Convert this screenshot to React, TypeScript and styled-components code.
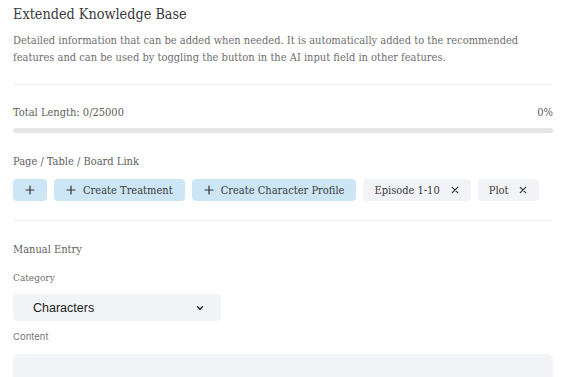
import React from 'react';
import styled, {createGlobalStyle} from "styled-components";

const GlobalStyle = createGlobalStyle`
    html, body {
        margin: 0;
        padding: 0;
        background: #ffffff;
    }
    body {
        font-family: "DejaVu Serif Condensed", "DejaVu Serif", serif;
        color: #333333;
    }
    * {
        box-sizing: border-box;
    }
`

type ChipData = { label: string; kind: "add" | "link" }

const chips: ChipData[] = [
    {label: "", kind: "add"},
    {label: "Create Treatment", kind: "add"},
    {label: "Create Character Profile", kind: "add"},
    {label: "Episode 1-10", kind: "link"},
    {label: "Plot", kind: "link"},
]

const PlusIcon = () => (
    <svg width="10" height="10" viewBox="0 0 10 10">
        <path d="M5 1v8M1 5h8" stroke="#333" strokeWidth="1.2" strokeLinecap="round"/>
    </svg>
)

const CloseIcon = () => (
    <svg width="8" height="8" viewBox="0 0 8 8">
        <path d="M1.3 1.3l5.4 5.4M6.7 1.3L1.3 6.7" stroke="#333" strokeWidth="1.2" strokeLinecap="round"/>
    </svg>
)

const Chevron = () => (
    <ChevronIcon width="8" height="6" viewBox="0 0 8 6">
        <path d="M1.5 1.8L4 4.2l2.5-2.4" fill="none" stroke="#222" strokeWidth="1.4" strokeLinecap="round" strokeLinejoin="round"/>
    </ChevronIcon>
)

export default function App() {
    return (
        <>
            <GlobalStyle/>
            <Page>
                <Title>Extended Knowledge Base</Title>
                <Description>
                    Detailed information that can be added when needed. It is automatically added to the recommended
                    features and can be used by toggling the button in the AI input field in other features.
                </Description>
                <Divider $top={18}/>
                <LengthRow>
                    <span>Total Length: 0/25000</span>
                    <span>0%</span>
                </LengthRow>
                <ProgressTrack>
                    <ProgressFill style={{width: "0%"}}/>
                </ProgressTrack>
                <SectionLabel $top={21}>Page / Table / Board Link</SectionLabel>
                <ChipRow>
                    {chips.map((c, i) => (
                        <Chip key={i} $kind={c.kind}>
                            {c.kind === "add" && <PlusIcon/>}
                            {c.label && <span>{c.label}</span>}
                            {c.kind === "link" && <CloseIcon/>}
                        </Chip>
                    ))}
                </ChipRow>
                <Divider $top={19}/>
                <SectionLabel $top={21}>Manual Entry</SectionLabel>
                <FieldLabel>Category</FieldLabel>
                <SelectWrap>
                    <Select defaultValue="Characters">
                        <option>Characters</option>
                        <option>Plot</option>
                        <option>Setting</option>
                    </Select>
                    <Chevron/>
                </SelectWrap>
                <ContentLabel>Content</ContentLabel>
                <TextArea/>
            </Page>
        </>
    );
}

const Page = styled.div`
    display: flex;
    flex-direction: column;
    padding: 4px 17px 0 13px;
    height: 377px;
    overflow: hidden;

    & > * {
        flex-shrink: 0;
    }
`

const Title = styled.h1`
    margin: 0;
    font-weight: 400;
    font-size: 14.3px;
    line-height: 20px;
    color: #3a3a3a;
`

const Description = styled.p`
    margin: 8px 0 0;
    font-size: 11px;
    line-height: 17px;
    color: #6e6e6e;
`

const Divider = styled.hr<{ $top: number }>`
    margin: ${p => p.$top}px 0 0;
    border: none;
    border-top: 1px solid #efefef;
    width: 100%;
`

const LengthRow = styled.div`
    display: flex;
    justify-content: space-between;
    margin-top: 20px;
    font-size: 11px;
    line-height: 16px;
    color: #5e5e5e;
`

const ProgressTrack = styled.div`
    margin-top: 7px;
    height: 5px;
    border-radius: 3px;
    background: #e6e6e8;
    overflow: hidden;
`

const ProgressFill = styled.div`
    height: 100%;
    background: #8cc4e8;
`

const SectionLabel = styled.div<{ $top: number }>`
    margin-top: ${p => p.$top}px;
    font-size: 11px;
    line-height: 16px;
    color: #5e5e5e;
`

const ChipRow = styled.div`
    display: flex;
    flex-wrap: wrap;
    gap: 7px;
    margin-top: 9px;
`

const Chip = styled.button<{ $kind: "add" | "link" }>`
    display: inline-flex;
    align-items: center;
    gap: ${p => p.$kind === "add" ? 7 : 11}px;
    height: 22px;
    padding: 0 12px 0 ${p => p.$kind === "add" ? 12 : 11}px;
    border: none;
    border-radius: 4px;
    background: ${p => p.$kind === "add" ? "#cde6f5" : "#f2f3f6"};
    font-family: inherit;
    font-size: 11px;
    color: #3a3a3a;
    cursor: pointer;
`

const FieldLabel = styled.div`
    margin-top: 13px;
    font-size: 10px;
    line-height: 14px;
    color: #6e6e6e;
`

const SelectWrap = styled.div`
    position: relative;
    margin-top: 9px;
    width: 208px;
`

const Select = styled.select`
    appearance: none;
    display: block;
    width: 100%;
    height: 27px;
    padding: 0 24px 0 20px;
    border: none;
    border-radius: 4px;
    background: #f3f4f7;
    font-family: "Liberation Sans", Arial, sans-serif;
    font-size: 12.5px;
    color: #222222;
`

const ChevronIcon = styled.svg`
    position: absolute;
    right: 17px;
    top: 11px;
    pointer-events: none;
`

const ContentLabel = styled.div`
    margin-top: 9px;
    font-family: Inter, "Liberation Sans", sans-serif;
    font-size: 9.5px;
    line-height: 14px;
    color: #777777;
`

const TextArea = styled.textarea`
    margin-top: 10px;
    width: 100%;
    height: 80px;
    border: none;
    border-radius: 5px;
    background: #f3f4f7;
    resize: none;
`
